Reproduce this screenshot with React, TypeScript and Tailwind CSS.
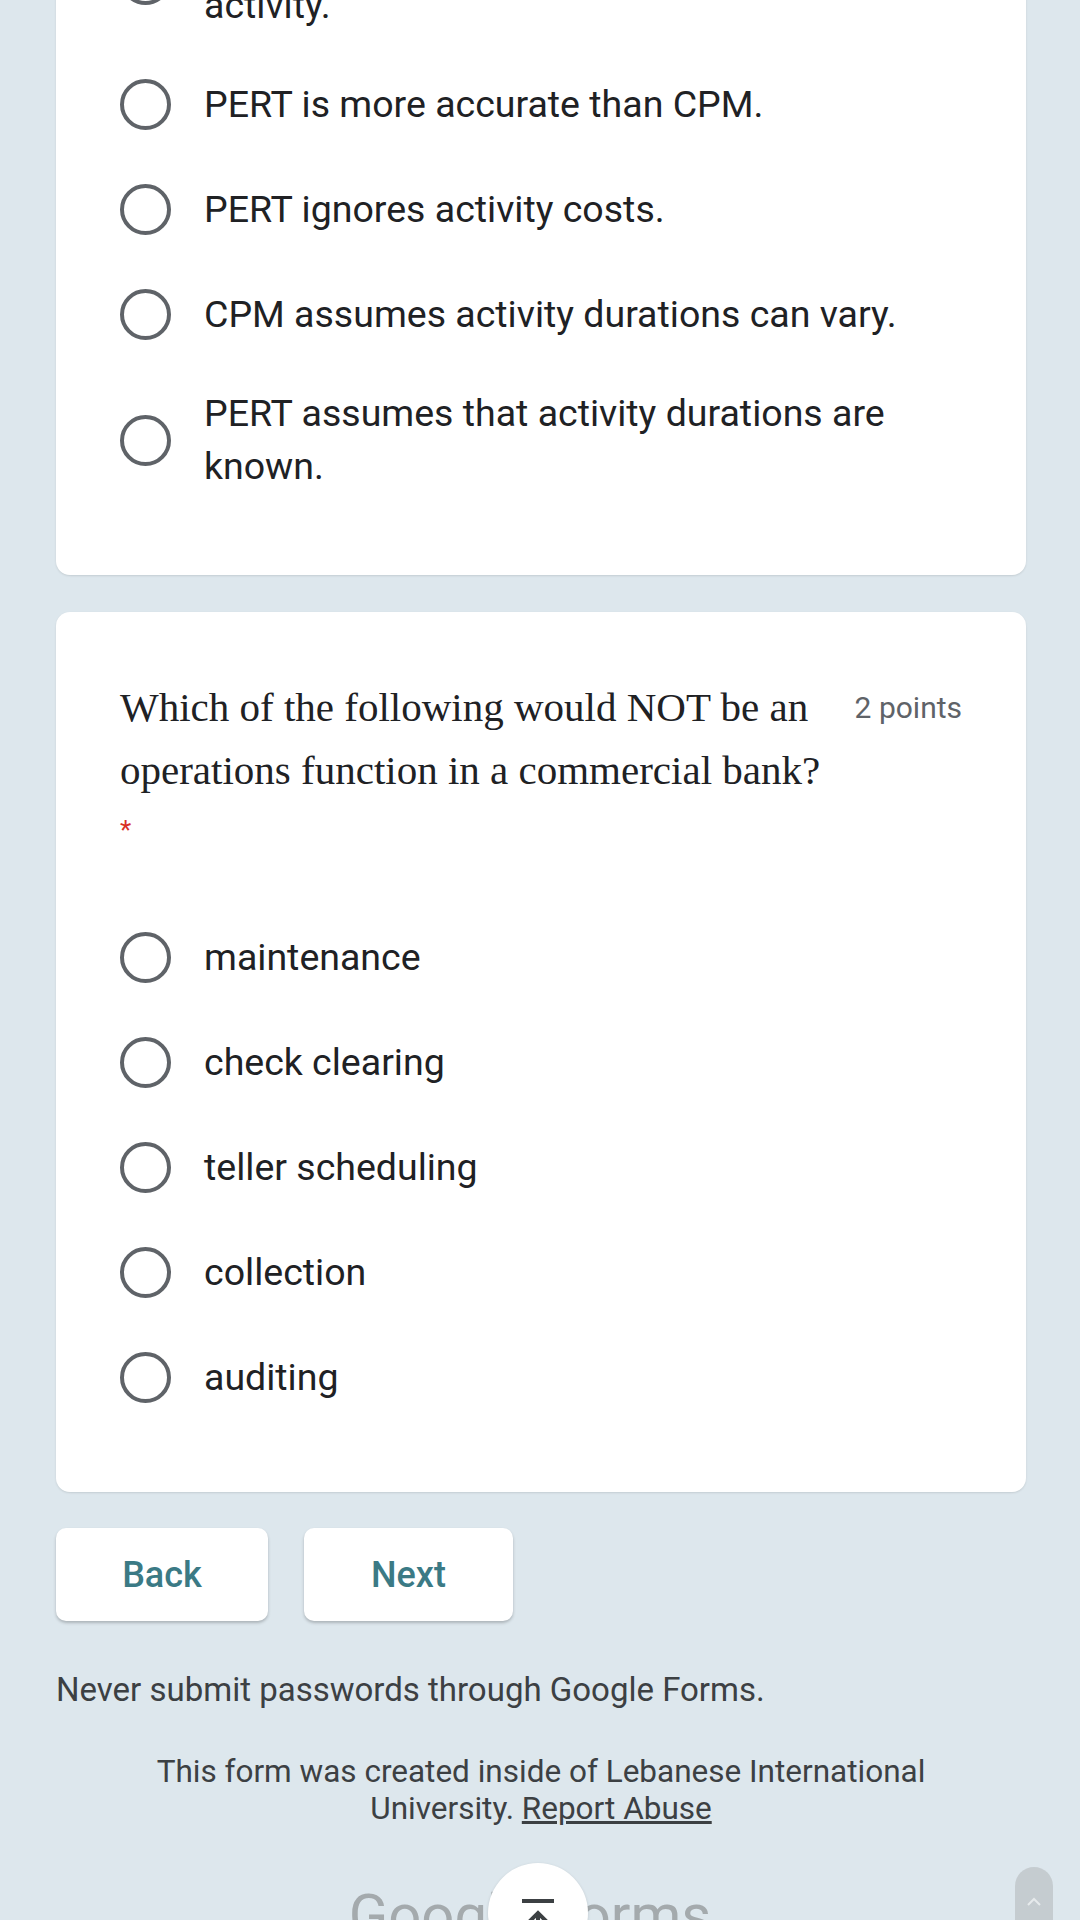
import type { ReactNode } from "react";

const firstCardOptions = [
  "PERT uses three estimates for each activity.",
  "PERT is more accurate than CPM.",
  "PERT ignores activity costs.",
  "CPM assumes activity durations can vary.",
  "PERT assumes that activity durations are known.",
];

const secondCardOptions = [
  "maintenance",
  "check clearing",
  "teller scheduling",
  "collection",
  "auditing",
];

function RadioOption({ children }: { children: ReactNode }) {
  return (
    <div className="flex min-h-[105px] items-center py-[20px]">
      <div className="flex w-[84px] shrink-0 items-center">
        <span className="block h-[51px] w-[51px] rounded-full border-[4px] border-[#5f6368]" />
      </div>
      <span className="text-[37.5px] leading-[53px] text-[#202124]">
        {children}
      </span>
    </div>
  );
}

function Card({ children, className = "" }: { children: ReactNode; className?: string }) {
  return (
    <div
      className={`rounded-[14px] bg-white px-[64px] shadow-[0_1px_2px_rgba(60,64,67,0.15)] ${className}`}
    >
      {children}
    </div>
  );
}

export default function App() {
  return (
    <div
      className="relative h-[1920px] overflow-hidden bg-[#dde7ed]"
      style={{ fontFamily: "Roboto, 'Liberation Sans', sans-serif" }}
    >
      <div className="flex flex-col pl-[56px] pr-[54px]">
        {/* scrolled: only the tail of the first question is on screen */}
        <Card className="-mt-[94px] pb-[62px]">
          {firstCardOptions.map((opt, i) => (
            <RadioOption key={opt}>
              {i === 0 ? (
                <>
                  PERT uses three estimates for each
                  <br />
                  activity.
                </>
              ) : (
                opt
              )}
            </RadioOption>
          ))}
        </Card>

        <Card className="mt-[37px] pt-[64px] pb-[62px]">
          <div className="flex items-start justify-between">
            <h2
              className="flex-1 text-[41px] leading-[63px] text-[#202124]"
              style={{ fontFamily: "'Liberation Serif', 'DejaVu Serif', serif" }}
            >
              Which of the following would NOT be an operations function in a
              commercial bank?
            </h2>
            <span className="shrink-0 pl-[24px] text-[30px] leading-[63px] text-[#5f6368]">
              2 points
            </span>
          </div>
          <div className="mt-[8px] text-[26px] leading-[40px] text-[#d93025]">*</div>

          <div className="mt-[55px]">
            {secondCardOptions.map((opt) => (
              <RadioOption key={opt}>{opt}</RadioOption>
            ))}
          </div>
        </Card>

        <div className="mt-[36px] flex gap-[36px]">
          <button
            type="button"
            className="h-[93px] w-[212px] rounded-[10px] bg-white text-[36px] font-medium text-[#3b7a85] shadow-[0_2px_3px_rgba(60,64,67,0.3)]"
          >
            Back
          </button>
          <button
            type="button"
            className="h-[93px] w-[209px] rounded-[10px] bg-white text-[36px] font-medium text-[#3b7a85] shadow-[0_2px_3px_rgba(60,64,67,0.3)]"
          >
            Next
          </button>
        </div>

        <p className="mt-[49px] text-[33px] leading-[40px] text-[#3c4043]">
          Never submit passwords through Google Forms.
        </p>

        <p className="mt-[43px] text-center text-[31.5px] leading-[37px] text-[#3c4043]">
          This form was created inside of Lebanese International
          <br />
          University. <span className="underline">Report Abuse</span>
        </p>

        <div className="mt-[59px] flex justify-center pr-[22px]">
          <span className="text-[58px] leading-[58px] text-[#a4aaad]">
            Google Forms
          </span>
        </div>
      </div>

      {/* scroll to top */}
      <div className="absolute left-[488px] top-[1863px] flex h-[100px] w-[100px] justify-center rounded-full bg-white shadow-[0_1px_3px_rgba(60,64,67,0.2)]">
        <svg
          width="40"
          height="60"
          viewBox="0 0 40 60"
          fill="none"
          stroke="#3c4043"
          strokeWidth="4"
          className="mt-[26px]"
        >
          <line x1="4" y1="12" x2="36" y2="12" />
          <polyline points="8,36 20,24 32,36" />
          <line x1="20" y1="24" x2="20" y2="60" />
        </svg>
      </div>

      {/* scrollbar handle */}
      <div className="absolute left-[1015px] top-[1867px] flex h-[80px] w-[38px] justify-center rounded-t-full bg-[#c5ccd0]">
        <svg width="16" height="10" viewBox="0 0 16 10" fill="none" stroke="#e6eaec" strokeWidth="2" className="mt-[30px]">
          <polyline points="2,8 8,2 14,8" />
        </svg>
      </div>
    </div>
  );
}
